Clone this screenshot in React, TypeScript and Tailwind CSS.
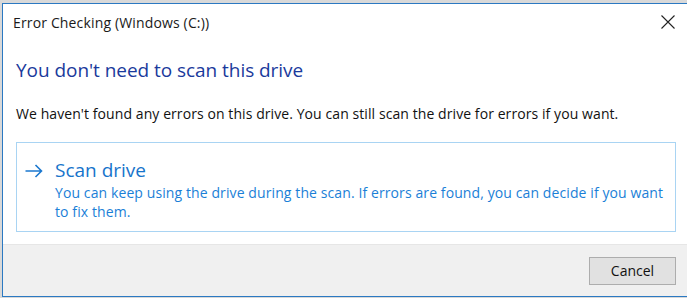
export default function App() {
  return (
    <div className="w-[687px] h-[298px] bg-[#d9d9d9] overflow-hidden" style={{ fontFamily: '"Open Sans", "Noto Sans", sans-serif' }}>
      <div className="ml-[2px] mt-[3px] h-[294px] border-l border-t border-b border-[#2b79c2] bg-white flex flex-col">
        {/* title bar */}
        <div className="h-[36px] flex items-center justify-between pl-[10px] pr-[12px]">
          <span className="text-[14px] text-[#1a1a1a] tracking-[0.15px]">Error Checking (Windows (C:))</span>
          <svg width="14" height="14" viewBox="0 0 14 14" fill="none" stroke="#222" strokeWidth="1.1">
            <path d="M0.5 0.5l13 13M13.5 0.5l-13 13" />
          </svg>
        </div>

        {/* content */}
        <div className="flex-1 px-[13px] pt-[18px]">
          <h1 className="text-[19px] leading-[24px] text-[#1a3a9c] tracking-[-0.05px]">You don't need to scan this drive</h1>
          <p className="mt-[22px] text-[14px] leading-[20px] text-[#111] tracking-[0.08px]">
            We haven't found any errors on this drive. You can still scan the drive for errors if you want.
          </p>

          <div className="mt-[18px] w-[660px] h-[90px] border border-[#a9d4f3] pl-[8px] pt-[14px] flex gap-[11px]">
            <svg width="19" height="14" viewBox="0 0 19 14" className="mt-[7px] shrink-0 text-[#1b78cf]" fill="none" stroke="currentColor" strokeWidth="1.6">
              <path d="M0.5 7h16M10.5 1l6 6-6 6" />
            </svg>
            <div className="text-[#1b7fd7]">
              <div className="text-[19px] leading-[26px] text-[#1774cb]">Scan drive</div>
              <p className="text-[14px] leading-[19px] tracking-[0.1px] pr-[6px]">
                You can keep using the drive during the scan. If errors are found, you can decide if you want to fix them.
              </p>
            </div>
          </div>
        </div>

        {/* footer */}
        <div className="h-[52px] bg-[#f0f0f0] border-t border-[#e6e6e6] flex items-center justify-end pr-[11px]">
          <button className="w-[87px] h-[28px] bg-[#e1e1e1] border border-[#adadad] text-[14px] text-[#111]">
            Cancel
          </button>
        </div>
      </div>
    </div>
  );
}
